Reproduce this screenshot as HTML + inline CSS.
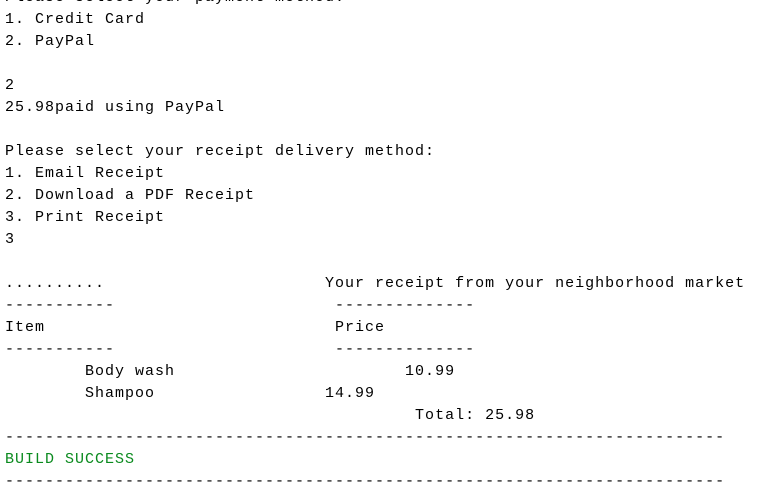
<!DOCTYPE html>
<html><head><style>
html,body{margin:0;padding:0;background:#fff;width:770px;height:485px;overflow:hidden}
pre{position:absolute;left:5px;top:-13px;margin:0;font-family:"Liberation Mono",monospace;font-size:15px;letter-spacing:1px;line-height:22px;color:#000}
.g{color:#0a8a1e}
</style></head><body><pre>Please select your payment method:
1. Credit Card
2. PayPal

2
25.98paid using PayPal

Please select your receipt delivery method:
1. Email Receipt
2. Download a PDF Receipt
3. Print Receipt
3

..........                      Your receipt from your neighborhood market
-----------                      --------------
Item                             Price
-----------                      --------------
        Body wash                       10.99
        Shampoo                 14.99
                                         Total: 25.98
------------------------------------------------------------------------
<span class="g">BUILD SUCCESS</span>
------------------------------------------------------------------------</pre></body></html>
